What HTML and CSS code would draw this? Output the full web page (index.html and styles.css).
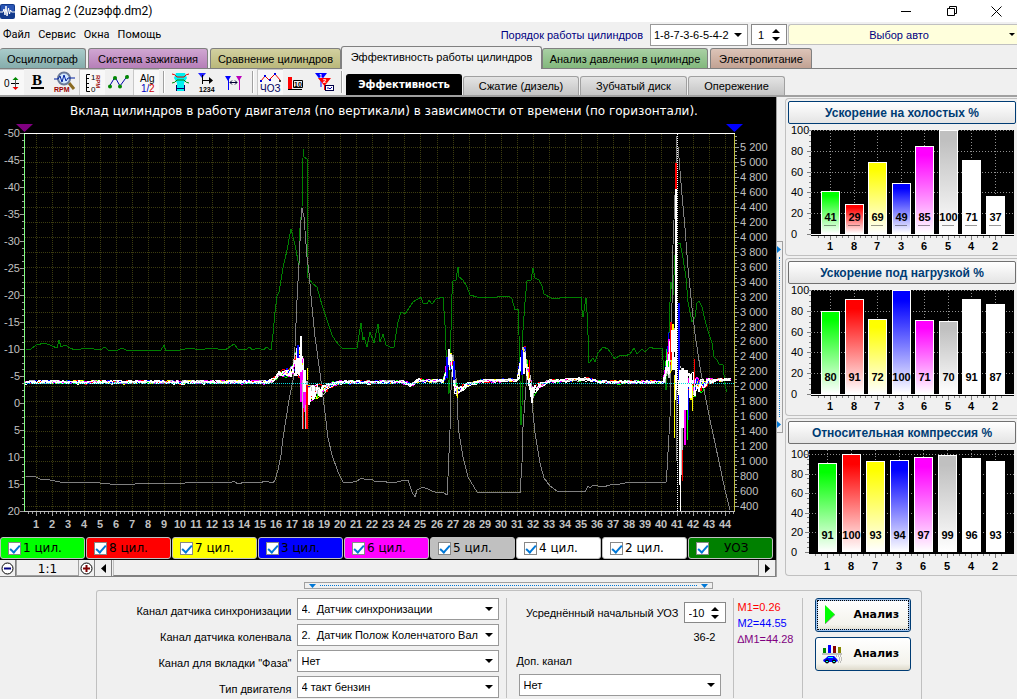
FILE: index.html
```html
<!DOCTYPE html>
<html lang="ru">
<head>
<meta charset="utf-8">
<title>Diamag 2 (2uzэфф.dm2)</title>
<link rel="stylesheet" href="styles.css">
</head>
<body>
<header class="titlebar">
  <svg class="app-icon" width="15" height="15" viewBox="0 0 15 15"><rect width="15" height="15" rx="2" fill="#123a8c"/><rect x="1" y="1" width="13" height="6" rx="1" fill="#2a55b4"/><path d="M0 8h3l1-3 1 6 1-9 1 10 1.500-8 1 6 1-4 1 2h3.500" fill="none" stroke="#fff"/></svg>
  <h1 class="app-title">Diamag 2 (2uzэфф.dm2)</h1>
  <div class="window-controls">
    <button class="win-btn" aria-label="Свернуть"><svg width="11" height="11"><path d="M0 5.500h10" stroke="#000"/></svg></button>
    <button class="win-btn" aria-label="Восстановить"><svg width="11" height="11"><path d="M.5 2.500h7v7h-7zM2.500 2.500v-2h7v7h-2" fill="none" stroke="#000"/></svg></button>
    <button class="win-btn last" aria-label="Закрыть"><svg width="11" height="11"><path d="M.5.5l10 10M10.500.5l-10 10" stroke="#000"/></svg></button>
  </div>
</header>

<div class="menurow">
  <nav class="menu">
    <button>Файл</button><button>Сервис</button><button>Окна</button><button>Помощь</button>
  </nav>
  <div class="order">
    <label class="order-label" for="order">Порядок работы цилиндров</label>
    <span class="combo order-combo"><select id="order"><option>1-8-7-3-6-5-4-2</option></select></span>
    <span class="spin"><input type="text" value="1" aria-label="Номер цилиндра"><span class="spin-arrows"><button class="up" aria-label="Больше"></button><button class="down" aria-label="Меньше"></button></span></span>
    <button class="car"><span>Выбор авто</span><i class="caret"></i></button>
  </div>
</div>

<nav class="tabs">
  <button class="tab tab-scope">Осциллограф</button>
  <button class="tab tab-ign">Система зажигания</button>
  <button class="tab tab-cmp">Сравнение цилиндров</button>
  <button class="tab tab-eff">Эффективность работы цилиндров</button>
  <button class="tab tab-pres">Анализ давления в цилиндре</button>
  <button class="tab tab-pow">Электропитание</button>
</nav>

<div class="toolbar">
  <button class="tool pressed first" aria-label="Смещение нуля"><svg width="24" height="24"><path d="M11 12.500h8" stroke="#000"/><path d="M15.500 7v11" stroke="#555"/><path d="M12.500 9l3-3 3 3z" fill="#080"/><path d="M12.500 16l3 3 3-3z" fill="#e00"/><text x="4" y="16" font-size="10">0</text></svg></button>
  <button class="tool" aria-label="Жирные линии"><svg width="24" height="24"><text x="6" y="15" class="serif" font-size="15">B</text><path d="M5 18h13" stroke="#000" stroke-width="2"/></svg></button>
  <button class="tool" aria-label="Обороты"><svg width="26" height="24"><path d="M17 13l5 6" stroke="#8a6a20" stroke-width="3"/><circle cx="12" cy="8.500" r="6" fill="#cfe6ff" stroke="#6b7a99" stroke-width="2"/><path d="M2 9h4l2-3 2 6 2-7 2 6 2-3h7" fill="none" stroke="#0020a0"/><text x="2" y="22" font-size="7" class="tiny red">RPM</text></svg></button>
  <button class="tool pressed" aria-label="Шкала оборотов"><svg width="25" height="24"><path d="M10 3.500H6.500v17H10M6 7.500h3M6 12.500h3M6 16.500h3" fill="none" stroke="#000"/><text x="11" y="9" font-size="8">1</text><text x="11" y="21" font-size="8">0</text><text x="0" y="0" font-size="6" class="tiny red" transform="translate(16 4) rotate(90)">RPM</text></svg></button>
  <button class="tool" aria-label="Точки"><svg width="26" height="24"><path d="M3 17l6-10 5 9 8-11" fill="none" stroke="#00a" stroke-width="1"/><g fill="#080"><circle cx="4" cy="16.500" r="2"/><circle cx="9" cy="8" r="2"/><circle cx="14" cy="16.500" r="2"/><circle cx="21" cy="7" r="2"/></g></svg></button>
  <button class="tool pressed" aria-label="Алгоритм"><svg width="26" height="24"><text x="6" y="11" font-size="10">Alg</text><text x="7" y="21" font-size="10" fill="#0000c0">1/</text><text x="15" y="21" font-size="10" fill="#d00000">2</text></svg></button>
  <i class="tool-sep"></i>
  <button class="tool" aria-label="Фильтр"><svg width="24" height="24"><path d="M7 3h9l2 5-3 5v8H8v-8L5 8z" fill="#00f0f0"/><path d="M3 4q3 0 5 3h7q2-3 5-3" fill="none" stroke="#e00"/><path d="M3 13q3 0 5-3h7q2 3 5 3" fill="none" stroke="#080"/><path d="M7.500 15v6M15.500 15v6M8 18.500h7" stroke="#006"/></svg></button>
  <button class="tool" aria-label="Нумерация"><svg width="26" height="24"><path d="M3 3h8L7 8z" fill="#22f"/><path d="M7.500 5v9M7 10.500h9" stroke="#000" fill="none"/><path d="M14 7l4 3.500-4 3.500z"/><text x="4" y="22" font-size="7" class="tiny">1234</text></svg></button>
  <button class="tool" aria-label="Метки"><svg width="26" height="24"><path d="M3 6h6L6 11z" fill="#00f"/><path d="M14 6h6l-3 5z" fill="#b0b"/><path d="M6.500 8v12" stroke="#00f"/><path d="M17.500 8v12" stroke="#b0b"/><path d="M8 12.500h7M10 10.500l-2 2 2 2M13 10.500l2 2-2 2" stroke="#003" fill="none"/></svg></button>
  <i class="tool-sep"></i>
  <button class="tool pressed" aria-label="УОЗ"><svg width="26" height="24"><path d="M3 10l4-5 4 4 6-6 5 6" fill="none" stroke="#e00"/><g fill="#00d"><rect x="6" y="4" width="2" height="2"/><rect x="11" y="8" width="2" height="2"/><rect x="16" y="2" width="2" height="2"/><rect x="2" y="9" width="2" height="2"/></g><circle cx="22" cy="10" r="1" fill="#000"/><text x="2" y="21" font-size="10" fill="#000060">ЧОЗ</text></svg></button>
  <button class="tool" aria-label="Уровень"><svg width="24" height="24"><rect x="3" y="7" width="4" height="12" fill="#f00"/><path d="M3 19.500h14M8.500 10.500h9v7h-9z" stroke="#000" fill="none"/><text x="9" y="17" font-size="7" class="tiny">10</text></svg></button>
  <button class="tool" aria-label="Настройка меток"><svg width="26" height="24"><path d="M4 3h12l-6 8z" fill="#00f"/><path d="M10 9v8" stroke="#00f"/><path d="M7 8h13l-6.500 8z" fill="#f00"/><path d="M13.500 14v6" stroke="#f00"/><text x="8" y="8" font-size="6" class="white">1</text><text x="12" y="13" font-size="6" class="white">2</text><rect x="14.500" y="15.500" width="8" height="5" fill="#fff" stroke="#004"/><path d="M16 18h2l1 1 2-2" stroke="#00a" fill="none"/></svg></button>
  <i class="tool-sep"></i>
  <nav class="subtabs">
    <button class="subtab current">Эффективность</button>
    <button class="subtab">Сжатие (дизель)</button>
    <button class="subtab narrow">Зубчатый диск</button>
    <button class="subtab slim">Опережение</button>
  </nav>
</div>

<main class="workspace">
  <section class="plot-panel">
    <svg id="plot" class="plot" viewBox="0 97 776 440" role="img" aria-label="Вклад цилиндров"></svg>
    <div class="legend">
      <label class="key c1"><input type="checkbox" checked>1 цил.</label>
      <label class="key c8"><input type="checkbox" checked>8 цил.</label>
      <label class="key c7"><input type="checkbox" checked>7 цил.</label>
      <label class="key c3"><input type="checkbox" checked>3 цил.</label>
      <label class="key c6"><input type="checkbox" checked>6 цил.</label>
      <label class="key c5"><input type="checkbox" checked>5 цил.</label>
      <label class="key c4"><input type="checkbox" checked>4 цил.</label>
      <label class="key c2"><input type="checkbox" checked>2 цил.</label>
      <label class="key uoz"><input type="checkbox" checked>УОЗ</label>
    </div>
    <div class="zoombar">
      <button class="zoom-btn" aria-label="Уменьшить"><svg width="13" height="13"><circle cx="6.500" cy="6.500" r="5.500" fill="#fff" stroke="#000"/><path d="M3 6.500h7" stroke="#000080" stroke-width="2"/></svg></button>
      <output class="zoom-value">1:1</output>
      <button class="zoom-btn" aria-label="Увеличить"><svg width="13" height="13"><circle cx="6.500" cy="6.500" r="5.500" fill="#fff" stroke="#000"/><path d="M3 6.500h7M6.500 3v7" stroke="#800000" stroke-width="2"/></svg></button>
      <button class="scroll-btn" aria-label="Влево"><svg width="5" height="9"><path d="M5 0v9L0 4.500z"/></svg></button>
      <div class="scroll-thumb"></div>
      <button class="scroll-btn" aria-label="Вправо"><svg width="5" height="9"><path d="M0 0v9l5-4.500z"/></svg></button>
    </div>
  </section>
  <div class="vsplit"><div class="vgrip"><svg width="4" height="7"><path d="M0 0v7l4-3.500z" fill="#0078d7"/></svg><i></i><svg width="4" height="7"><path d="M0 0v7l4-3.500z" fill="#0078d7"/></svg></div></div>
  <aside class="side">
    <section class="group"><button class="group-head focus">Ускорение на холостых %</button><svg id="idle" class="bars" viewBox="786 124 231 131"></svg></section>
    <section class="group"><button class="group-head">Ускорение под нагрузкой %</button><svg id="load" class="bars" viewBox="786 284 231 131"></svg></section>
    <section class="group"><button class="group-head">Относительная компрессия %</button><svg id="comp" class="bars" viewBox="786 444 231 131"></svg></section>
  </aside>
</main>

<div class="hsplit"><svg width="7" height="4"><path d="M0 0h7L3.500 4z" fill="#0078d7"/></svg><i></i><svg width="7" height="4"><path d="M0 0h7L3.500 4z" fill="#0078d7"/></svg></div>

<section class="settings">
  <div class="channels">
    <label for="sync">Канал датчика синхронизации</label><span class="combo"><select id="sync"><option>4.&nbsp; Датчик синхронизации</option></select></span>
    <label for="crank">Канал датчика коленвала</label><span class="combo"><select id="crank"><option>2.&nbsp; Датчик Полож Коленчатого Вал</option></select></span>
    <label for="phase">Канал для вкладки "Фаза"</label><span class="combo"><select id="phase"><option>Нет</option></select></span>
    <label for="engine">Тип двигателя</label><span class="combo"><select id="engine"><option>4 такт бензин</option></select></span>
  </div>
  <div class="advance">
    <div class="advance-row"><label for="uoz">Усреднённый начальный УОЗ</label><span class="spin wide"><input id="uoz" type="text" value="-10"><span class="spin-arrows"><button class="up" aria-label="Больше"></button><button class="down" aria-label="Меньше"></button></span></span></div>
    <div class="teeth">36-2</div>
    <label class="extra-label" for="extra">Доп. канал</label>
    <span class="combo"><select id="extra"><option>Нет</option></select></span>
  </div>
  <div class="marks">
    <div class="m1">M1=0.26</div><div class="m2">M2=44.55</div><div class="dm">∆M1=44.28</div>
  </div>
  <div class="actions">
    <button class="action default"><svg width="22" height="22"><path d="M3 1v19l10-9.500z" fill="#0f0"/><path d="M3 20l10-9.500" stroke="#888"/></svg><span>Анализ</span></button>
    <button class="action"><svg width="22" height="22"><rect x="1" y="5" width="3" height="5" fill="#080"/><rect x="6" y="2" width="3" height="8" fill="#00f"/><rect x="11" y="3" width="3" height="7" fill="#800"/><rect x="16" y="4" width="3" height="6" fill="#880"/><path d="M0 11h20" stroke="#888"/><path d="M1 17l3-2 2-2h6l3 3 1 2-2 1H2z" fill="#00f"/><path d="M6 14.500h5" stroke="#0ff"/><circle cx="5" cy="18.500" r="2"/><circle cx="12" cy="18.500" r="2"/><g fill="#0ff"><rect x="4" y="18" width="2" height="1"/><rect x="11" y="18" width="2" height="1"/></g><path d="M14 13h6M17 15h4M17 17h4M16 19h4" stroke="#888" stroke-dasharray="1 1"/></svg><span>Анализ</span></button>
  </div>
</section>
<script src="script.js"></script>
</body>
</html>
```

FILE: styles.css
```css
* { box-sizing: border-box; }

body {
  margin: 0;
  background: #f0f0f0;
  color: #000;
  font: 11px/16px "Liberation Sans", Arial, sans-serif;
  overflow-x: hidden;
}

button, input, select { margin: 0; padding: 0; font: inherit; color: inherit; }
button { border: 0; background: none; }

.titlebar { display: flex; align-items: center; height: 22px; background: #fff; }
.app-title { margin: 0 0 0 5px; font: 12px/20px Roboto, sans-serif; flex: 1; }
.window-controls { display: flex; }
.win-btn { width: 46px; height: 20px; display: grid; place-items: center; }
.win-btn.last { width: 42px; }

.menurow { display: flex; justify-content: space-between; height: 25px; align-items: center; }
.menu { display: flex; gap: 8px; padding: 1px 0 0 3px; font: 11px/16px Roboto, sans-serif; }
.order { display: flex; align-items: center; }
.order-label { color: #000080; margin-right: 7px; }

.combo { position: relative; display: block; height: 22px; background: #fff; border: 1px solid #999; }
.combo::after {
  content: ""; position: absolute; right: 5px; top: 8px; pointer-events: none;
  border: 4px solid transparent; border-top-color: #000; border-bottom: 0;
}
.combo select { width: 100%; height: 20px; padding: 0 20px 0 4px; border: 0; background: none; appearance: none; }
.order-combo { width: 98px; margin-right: 3px; }
.order-combo select { padding: 0 0 0 3px; }

.spin { display: flex; width: 36px; height: 21px; background: #fff; border: 1px solid #888; }
.spin input { flex: 1; min-width: 0; border: 0; background: none; padding-left: 6px; }
.spin.wide { width: 42px; }
.spin.wide input { padding-left: 4px; }
.spin-arrows { display: flex; flex-direction: column; justify-content: center; gap: 4px; padding-right: 6px; }
.up, .down { width: 0; height: 0; border: 4px solid transparent; }
.up { border-bottom-color: #000; border-top: 0; }
.down { border-top-color: #000; border-bottom: 0; }

.car { display: flex; align-items: center; width: 229px; height: 21px; margin-left: 1px; background: #ffffdc; border: 1px solid #c0c0c0; border-right: 0; border-radius: 3px 0 0 3px; color: #000080; }
.car span { flex: 1; }
.caret { border: 3px solid transparent; border-top-color: #000; border-bottom: 0; margin-right: 2px; }

.tabs { display: flex; align-items: flex-end; gap: 2px; height: 22px; border-bottom: 1px solid #808080; }
.tab { height: 20px; border: 1px solid #808080; border-bottom: 0; border-radius: 3px 3px 0 0; white-space: nowrap; }
.tab-scope { width: 86px; border-left: 0; background: linear-gradient(#a9cbca, #86adac); }
.tab-ign { width: 120px; background: linear-gradient(#d0a6d2, #b67fb8); }
.tab-cmp { width: 131px; background: linear-gradient(#d2d0a0, #bab87a); }
.tab-eff { width: 201px; height: 23px; margin: 0 -2px -1px; background: #f0f0f0; padding-bottom: 2px; }
.tab-pres { width: 166px; background: linear-gradient(#a9d0a4, #83b87d); }
.tab-pow { width: 102px; background: linear-gradient(#dcc4b8, #c2a293); }

.toolbar { display: flex; align-items: center; height: 28px; border-bottom: 2px solid #a0a0a0; }
.tool { width: 26px; height: 26px; display: grid; place-items: center; flex: none; margin-right: 1px; }
.tool.pressed { background: #f8f8f8; border: 1px solid #c8c8c8; border-width: 1px 0 0 1px; }
.tool.first { width: 24px; border-left: 0; }
.tool text { font-family: "Liberation Sans", sans-serif; }
.tool .serif { font-family: "Liberation Serif", serif; font-weight: bold; }
.tool .tiny { font-weight: bold; }
.tool .red { fill: #900; }
.tool .white { fill: #fff; font-weight: bold; }
.tool-sep { width: 2px; height: 22px; margin: 0 3px; border-left: 1px solid #a0a0a0; border-right: 1px solid #fff; }
.subtabs { display: flex; align-self: flex-end; align-items: flex-end; gap: 1px; }
.subtab { width: 116px; height: 19px; border: 1px solid #a0a0a0; border-bottom: 0; border-radius: 3px 3px 0 0; background: linear-gradient(#e4e4e4, #c4c4c4); }
.subtab.current { height: 21px; background: #000; color: #fff; border-color: #000; font: bold 10px/16px "DejaVu Sans", sans-serif; }
.subtab.narrow { width: 107px; }
.subtab.slim { width: 97px; }

.workspace { display: grid; grid-template-columns: minmax(0, 1fr) 8px 232px; }
.plot-panel { background: #000; border-right: 1px solid #a0a0a0; }
.plot { display: block; width: 100%; }
.plot text { font: 11px "Liberation Sans", sans-serif; fill: #c0c0c0; }
.plot .heading { font: 12px "DejaVu Sans", sans-serif; fill: #fff; }
.plot .xlabel { font-weight: bold; }

.legend { display: grid; grid-template-columns: repeat(9, 1fr); gap: 1px; padding: 0 3px 1px 0; }
.key { display: flex; align-items: center; height: 22px; padding-left: 7px; border: 1px solid #c0c0c0; border-radius: 3px; font: 12px/20px "DejaVu Sans", sans-serif; gap: 2px; }
.key input { appearance: none; width: 13px; height: 13px; border: 1px solid #888; background: #fff; display: grid; place-items: center; }
.key input:checked::after { content: ""; width: 4px; height: 8px; border: solid #0078d7; border-width: 0 2px 2px 0; transform: rotate(42deg); margin-bottom: 2px; }
.c1 { background: #0f0; } .c8 { background: #f00; } .c7 { background: #ff0; }
.c3 { background: #00f; } .c6 { background: #f0f; } .c5 { background: #c0c0c0; }
.c4, .c2 { background: #fff; }
.uoz { background: #008000; gap: 15px; }

.zoombar { display: flex; height: 17px; background: #f0f0f0; border-bottom: 1px solid #808080; }
.zoom-btn, .scroll-btn { width: 16px; display: grid; place-items: center; border-right: 1px solid #808080; flex: none; }
.zoom-value { width: 63px; text-align: center; border: 1px solid #a0a0a0; border-top: 0; font: 12px/18px "DejaVu Sans", sans-serif; }
.scroll-btn { width: 17px; }
.scroll-thumb { flex: 1; border: 1px solid #808080; border-left-color: #c0c0c0; border-top: 0; margin-left: 1px; }

.vsplit { display: flex; align-items: center; }
.vgrip { display: flex; flex-direction: column; gap: 4px; width: 6px; height: 192px; padding: 4px 0; border: 1px solid #a0a0a0; border-left: 0; }
.vgrip i { flex: 1; border-left: 1px dotted #0078d7; margin-left: 2px; }

.side { display: flex; flex-direction: column; gap: 2px; padding-top: 1px; }
.group { border: 1px solid #c0c0c0; border-right: 0; border-radius: 4px 0 0 4px; padding-top: 2px; }
.group-head { display: block; width: calc(100% - 3px); height: 23px; margin-left: 2px; border: 1px solid #707070; border-radius: 2px; background: linear-gradient(#fff, #e4e4e4); color: #003c74; font-size: 12px; font-weight: bold; }
.group-head.focus { border-color: #003c74; }
.bars { display: block; width: 100%; }
.bars text { font: 11px "Liberation Sans", sans-serif; }
.bars .strong { font-weight: bold; }

.hsplit { display: flex; align-items: center; gap: 4px; width: 409px; height: 7px; margin: 5px auto 1px; padding: 0 4px; border: 1px solid #a0a0a0; }
.hsplit i { flex: 1; border-top: 1px dotted #0078d7; }

.settings { display: flex; width: 826px; margin: 0 auto; padding: 7px 0 2px; border: 1px solid #c0c0c0; border-bottom: 0; border-radius: 3px 3px 0 0; }
.channels { display: grid; grid-template-columns: 195px 202px; gap: 4px 5px; text-align: right; align-items: center; margin-right: 7px; }
.channels label { padding-top: 4px; }
.advance { width: 228px; border: solid #c0c0c0; border-width: 0 1px; padding: 4px 12px 2px; display: flex; flex-direction: column; }
.advance-row { display: flex; justify-content: flex-end; align-items: center; gap: 5px; margin-right: -5px; white-space: nowrap; }
.teeth { text-align: right; padding: 6px 5px 8px; }
.extra-label { margin-left: -2px; padding-bottom: 5px; }
.marks { width: 69px; padding: 1px 0 0 4px; border-right: 1px solid #c0c0c0; white-space: nowrap; }
.m1 { color: #f00; } .m2 { color: #00f; } .dm { color: #800080; }
.actions { display: flex; flex-direction: column; gap: 5px; margin-left: 12px; }
.action { display: flex; align-items: center; gap: 10px; width: 96px; height: 34px; padding-left: 6px; border: 1px solid #003c74; border-radius: 3px; background: linear-gradient(#fff, #f4f3ec 80%, #dedacb); font: bold 11px/16px "DejaVu Sans", sans-serif; }
.action.default { box-shadow: inset 0 0 0 2px #a0c4f0; outline: 1px dotted #000; outline-offset: -3px; }
```

FILE: script.js
```js
const NS = 'http://www.w3.org/2000/svg';

function add(parent, name, attrs, text) {
  const el = document.createElementNS(NS, name);
  for (const key in attrs) el.setAttribute(key, attrs[key]);
  if (text !== undefined) el.textContent = text;
  parent.appendChild(el);
  return el;
}

let seed = 7;
function rnd() {
  seed = (seed * 1103515245 + 12345) % 2147483648;
  return seed / 2147483648;
}

function valueAt(points, x) {
  for (let i = 1; i < points.length; i++) {
    const a = points[i - 1], b = points[i];
    if (x <= b[0]) return a[1] + (b[1] - a[1]) * (x - a[0]) / (b[0] - a[0] || 1);
  }
  return points[points.length - 1][1];
}

function drawPlot() {
  const svg = document.getElementById('plot');
  const line = (d, stroke, extra) => add(svg, 'path', { d, stroke, fill: 'none', 'shape-rendering': 'crispEdges', ...extra });
  let d = '';
  for (let k = 0; k < 25; k++) d += `M25 ${Math.round(147 + k * 14.96) + 0.5}H734`;
  for (let k = 0; k < 44; k++) d += `M${Math.round(36 + k * 16.02) + 0.5} 134V511`;
  line(d, '#3c3c10', { 'stroke-dasharray': '1 1' });

  const uoz = '26,350 31,349 36,345 45,343 52,346 57,348 59,340 61,347 65,345 70,348 75,350 88,348 100,350 105,347 108,350 116,351 122,348 126,350 150,351 161,350 164,345 166,351 180,350 190,348 200,350 210,348 225,350 234,344 238,349 245,350 250,347 252,350 258,348 264,350 266,347 271,350 273,334 275,312 277,296 279,292 283,268 287,250 291,229 295,245 299,266 300,228 302,207 303,158 303,149 304,157 307,159 307,218 308,278 313,284 317,287 322,305 327,320 332,335 335,340 339,345 343,349 357,348 361,323 363,340 364,337 367,347 370,332 374,343 378,324 380,342 383,334 386,345 390,347 394,347 396,334 398,322 401,312 405,314 413,302 421,297 423,303 427,304 429,300 432,304 436,299 443,297 445,325 446,350 449,394 451,330 451,308 453,281 456,280 458,267 459,277 463,280 467,287 470,295 477,297 497,297 500,296 509,296 512,299 515,310 518,309 519,335 521,425 522,407 523,330 525,302 527,281 531,280 533,268 535,278 539,280 542,286 544,294 551,298 560,298 565,297 570,298 581,297 582,310 583,317 586,298 587,312 588,335 589,363 593,358 595,362 598,353 603,347 608,349 615,359 620,355 625,356 630,354 634,348 637,354 642,349 645,352 650,347 655,349 662,348 663,360 666,390 668,363 670,302 671,282 673,295 675,255 677,243 680,243 683,258 686,278 688,302 692,322 695,317 697,303 699,301 702,307 705,320 709,334 712,343 714,357 717,360 719,364 723,365 725,385 727,392';
  const rpm = '26,476 36,477 40,479 50,480 60,482 70,482 80,483 90,482 100,483 120,485 135,484 150,483 170,484 200,482 225,482 232,482 234,481 238,484 245,482 260,483 265,481 273,483 275,480 278,470 281,455 283,438 289,400 293,380 295,347 297,300 299,263 301,220 302,208 304,217 307,257 309,273 312,307 315,337 320,373 325,413 328,438 332,455 338,472 343,482 349,483 357,481 362,478 366,480 371,479 376,482 383,481 390,483 397,482 405,480 408,480 412,492 415,497 417,490 423,487 430,490 437,493 443,492 447,495 448,477 450,430 451,390 453,355 457,385 457,407 459,433 463,457 468,477 477,492 485,493 505,492 519,492 520,493 522,463 523,427 526,387 527,363 532,402 535,433 540,463 544,478 550,486 557,491 585,492 588,486 590,488 593,485 603,487 610,485 620,484 630,482 650,482 666,482 667,470 670,417 671,363 673,245 675,195 677,136 679,158 682,195 685,228 688,268 692,308 695,334 700,367 705,395 710,420 718,457 725,490 730,510';
  for (const [points, stroke] of [[uoz, '#008000'], [rpm, '#808080']]) {
    add(svg, 'polyline', { points, stroke, fill: 'none', 'shape-rendering': 'crispEdges' });
  }

  // Common level of the cylinder curves and the spread of the noise around it.
  const level = [[25, 382], [268, 382], [275, 379], [280, 373], [290, 373], [294, 366], [298, 362], [302, 362], [305, 385], [309, 394], [315, 392], [325, 389], [333, 384], [345, 382], [405, 382], [411, 385], [418, 380], [425, 381], [444, 381], [448, 362], [450, 356], [453, 368], [455, 386], [458, 392], [466, 385], [480, 381], [517, 380], [521, 362], [524, 354], [528, 368], [532, 393], [538, 386], [550, 381], [586, 379], [600, 382], [664, 382], [670, 350], [674, 345], [680, 390], [686, 390], [692, 385], [698, 387], [706, 383], [716, 380], [733, 379]];
  const spread = [[25, 2], [270, 2], [276, 3], [292, 6], [296, 16], [302, 18], [308, 12], [314, 9], [325, 5], [335, 3], [345, 2], [444, 2], [447, 10], [454, 10], [460, 4], [470, 2], [517, 2], [520, 12], [530, 12], [534, 5], [545, 2], [664, 2], [668, 22], [674, 28], [684, 22], [692, 14], [700, 8], [708, 4], [715, 2], [733, 1]];
  const colours = ['#00ff00', '#ff0000', '#ffff00', '#0000ff', '#ff00ff', '#c0c0c0', '#ffffff', '#ffffff', '#ffffff'];
  for (const stroke of colours) {
    let points = '';
    for (let x = 25; x < 733; x += 2) {
      points += `${x},${Math.round(valueAt(level, x) + (rnd() - 0.5) * 2 * valueAt(spread, x))} `;
    }
    add(svg, 'polyline', { points, stroke, fill: 'none', 'shape-rendering': 'crispEdges' });
  }

  const spikes = [
    ['#ff00ff', 301, 370, 402, 3], ['#ff00ff', 304, 380, 412, 3], ['#ff0000', 307, 385, 429, 2], ['#c0c0c0', 302, 380, 429, 1], ['#ff0000', 303, 408, 429, 1], ['#c0c0c0', 305, 405, 429, 1],
    ['#0000ff', 298, 345, 365, 2], ['#ffff00', 307, 368, 380, 1], ['#ffffff', 301, 336, 372, 2], ['#ffffff', 298, 358, 374, 4], ['#ffffff', 304, 370, 392, 3], ['#ffffff', 309, 388, 402, 3], ['#ffffff', 313, 386, 399, 3],
    ['#0000ff', 447, 357, 378, 2], ['#0000ff', 454, 361, 380, 2], ['#ffffff', 449, 352, 370, 1], ['#ffff00', 457, 388, 398, 1],
    ['#0000ff', 522, 350, 375, 2], ['#ffff00', 523, 349, 365, 1], ['#ffffff', 524, 352, 374, 2], ['#ff0000', 529, 360, 378, 1], ['#ffffff', 532, 388, 403, 2],
    ['#ff0000', 671, 322, 360, 2], ['#ff0000', 676, 163, 190, 2], ['#0000ff', 675, 275, 310, 1], ['#ffffff', 676, 189, 380, 2], ['#0000ff', 679, 303, 380, 2], ['#ffffff', 673, 330, 352, 5], ['#ffffff', 676, 320, 400, 3],
    ['#ffff00', 674, 375, 438, 1], ['#808080', 676, 390, 461, 1], ['#ff00ff', 685, 400, 445, 2], ['#0000ff', 688, 390, 420, 2], ['#00ff00', 687, 395, 440, 1], ['#ffff00', 692, 385, 411, 1],
    ['#c0c0c0', 681, 400, 475, 4], ['#ff0000', 680, 455, 506, 1], ['#ff0000', 682, 450, 481, 1], ['#ffffff', 680, 370, 485, 2], ['#ffffff', 680, 380, 511, 1], ['#ffffff', 684, 370, 410, 8], ['#ffffff', 682, 380, 428, 4], ['#ffffff', 690, 374, 398, 3], ['#ff0000', 694, 359, 380, 1]
  ];
  for (const [stroke, x, y1, y2, w] of spikes) line(`M${x + (w % 2) / 2} ${y1}V${y2}`, stroke, { 'stroke-width': w });

  line('M25 383.500H734', '#00e0e0', { 'stroke-dasharray': '1 1' });
  line('M677.5 134V511', '#000');
  line('M677.5 134V511', '#fff', { 'stroke-dasharray': '1 1' });
  line('M24 133.500H735', '#fff');
  line('M24 511.500H735', '#c0c0c0');

  let left = '', right = '', bottom = '';
  for (let k = 0; k <= 14; k++) {
    const y = 133 + k * 27;
    left += `M20 ${y + 0.5}H24`;
    if (k < 14) for (let m = 1; m < 4; m++) left += `M22 ${Math.round(y + m * 6.75) + 0.5}H24`;
    add(svg, 'text', { x: 20, y: y + 4, 'text-anchor': 'end' }, -50 + k * 5);
  }
  for (let k = 0; k < 25; k++) {
    const y = Math.round(147 + k * 14.96);
    right += `M735 ${y + 0.5}H739`;
    for (let m = 1; m < 4; m++) right += `M735 ${Math.round(y - m * 3.74) + 0.5}H737`;
    const value = 5200 - k * 200;
    const label = value < 1000 ? value : Math.floor(value / 1000) + ' ' + String(value % 1000).padStart(3, '0');
    add(svg, 'text', { x: 740, y: y + 4 }, label);
  }
  for (let k = 0; k < 44; k++) {
    const x = Math.round(36 + k * 16.02);
    bottom += `M${x + 0.5} 512V516`;
    for (let m = -2; m < 3; m++) if (m) bottom += `M${x + m * 4 + 0.5} 512V514`;
    add(svg, 'text', { x, y: 528, 'text-anchor': 'middle', class: 'xlabel' }, k + 1);
  }
  line(left + right + bottom, '#a0a0a0');
  line('M24.5 134V511', '#80ff80');
  line('M734.5 134V511', '#c0c040');
  add(svg, 'path', { d: 'M16 124H33L24.500 132z', fill: '#800080' });
  add(svg, 'path', { d: 'M726 124H743L734.500 132z', fill: '#0000ff' });
  add(svg, 'text', { x: 384, y: 115, 'text-anchor': 'middle', class: 'heading' }, 'Вклад цилиндров в работу двигателя (по вертикали) в зависимости от времени (по горизонтали).');
}

const CYLINDERS = [[1, '#00ff00'], [8, '#ff0000'], [7, '#ffff00'], [3, '#0000ff'], [6, '#ff00ff'], [5, '#c0c0c0'], [4, '#ffffff'], [2, '#ffffff']];

function drawBars(id, o) {
  const svg = document.getElementById(id);
  const scale = (o.zero - o.full) / 100;
  const crisp = { 'shape-rendering': 'crispEdges' };
  const defs = add(svg, 'defs', {});
  add(svg, 'rect', { x: o.left, y: o.top, width: 1014 - o.left, height: o.zero + 2 - o.top, ...crisp });
  let grid = '', ticks = '';
  for (let v = 0; v <= 100; v += 20) {
    const y = Math.round(o.zero - v * scale);
    if (v) grid += `M${o.left} ${y + 0.5}H1014`;
    ticks += `M${o.left - 4} ${y + 0.5}H${o.left}`;
    if (v < 100) for (let m = 1; m < 4; m++) ticks += `M${o.left - 2} ${Math.round(y - m * 5 * scale) + 0.5}H${o.left}`;
    add(svg, 'text', { x: 791, y: y + 4 }, v);
  }
  CYLINDERS.forEach((c, i) => {
    const x = Math.round(o.first + i * o.step);
    grid += `M${x + 0.5} ${o.top}V${o.zero}`;
    ticks += `M${x + 0.5} ${o.zero + 2}V${o.zero + 6}M${x - 5.5} ${o.zero + 2}V${o.zero + 4}M${x - 11.5} ${o.zero + 2}V${o.zero + 4}M${x + 6.5} ${o.zero + 2}V${o.zero + 4}`;
  });
  add(svg, 'path', { d: grid, stroke: '#909090', 'stroke-dasharray': '1 2', fill: 'none', ...crisp });
  add(svg, 'path', { d: ticks, stroke: '#808080', fill: 'none', ...crisp });
  add(svg, 'path', { d: `M${o.left} ${o.zero + 0.5}H1014`, stroke: o.base, ...crisp });
  CYLINDERS.forEach(([n, colour], i) => {
    const x = Math.round(o.first + i * o.step);
    const g = add(defs, 'linearGradient', { id: id + i, x1: 0, y1: 0, x2: 0, y2: 1 });
    add(g, 'stop', { offset: 0.1, 'stop-color': colour });
    add(g, 'stop', { offset: 1, 'stop-color': '#fff' });
    const h = Math.round(o.values[i] * scale);
    add(svg, 'rect', { x: x - 8.5, y: o.zero - h + 0.5, width: 18, height: h - 1, fill: `url(#${id + i})`, stroke: '#fff', ...crisp });
    add(svg, 'text', { x: x + 0.5, y: o.zero - 13, 'text-anchor': 'middle', class: 'strong' }, o.values[i]);
    if (o.underline) add(svg, 'path', { d: `M${x - 6} ${o.zero - 8.5}h12`, stroke: '#000', 'stroke-opacity': 0.4, ...crisp });
    add(svg, 'text', { x, y: o.zero + (o.labelGap || 16), 'text-anchor': 'middle', class: 'strong' }, n);
  });
}

drawPlot();
drawBars('idle', { values: [41, 29, 69, 49, 85, 100, 71, 37], top: 130, full: 130, zero: 234, left: 811, first: 830, step: 23.57, base: '#fff', underline: true });
drawBars('load', { values: [80, 91, 72, 100, 71, 70, 91, 87], top: 290, full: 290, zero: 394, left: 811, first: 830, step: 23.57, base: '#fff' });
drawBars('comp', { values: [91, 100, 93, 94, 97, 99, 96, 93], top: 450, full: 454, zero: 552, left: 809, first: 827, step: 24, base: '#000', labelGap: 18 });
```
